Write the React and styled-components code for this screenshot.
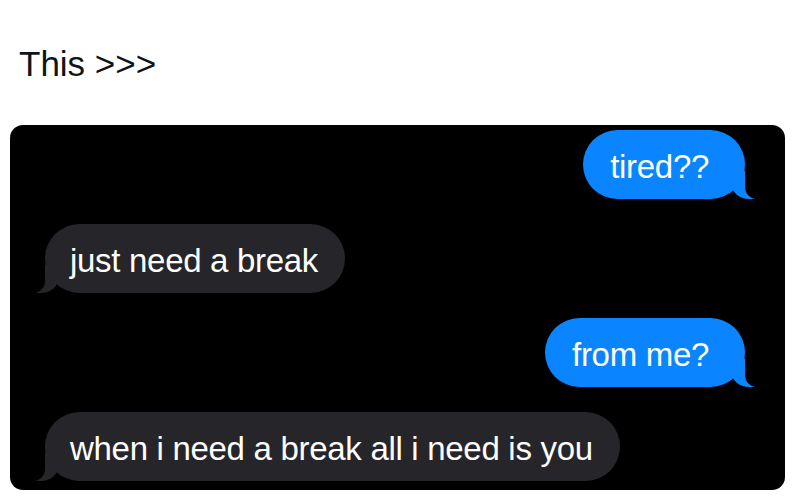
import React from "react";
import styled, { createGlobalStyle } from "styled-components";

const GlobalStyle = createGlobalStyle`
  html, body {
    margin: 0;
    padding: 0;
    background: #ffffff;
  }
  body {
    font-family: "Liberation Sans", Arial, sans-serif;
  }
`;

const Page = styled.div`
  width: 800px;
  height: 504px;
  overflow: hidden;
  padding-top: 42px;
  box-sizing: border-box;
`;

const Title = styled.div`
  margin: 0 0 0 19px;
  height: 83px;
  font-size: 35px;
  line-height: 44px;
  color: #0f1419;
  font-family: "Liberation Sans", Arial, sans-serif;
`;

const Chat = styled.div`
  margin: 0 15px 0 10px;
  background: #000000;
  border-radius: 13px;
  padding: 5px 40px 9px 35px;
  display: flex;
  flex-direction: column;
  gap: 25px;
`;

const Row = styled.div`
  display: flex;
  justify-content: ${({ $mine }) => ($mine ? "flex-end" : "flex-start")};
`;

const Bubble = styled.div`
  position: relative;
  z-index: 0;
  height: 69px;
  display: flex;
  align-items: center;
  padding: 4px ${({ $mine }) => ($mine ? "36px 0 27px" : "27px 0 25px")};
  box-sizing: border-box;
  border-radius: 35px;
  font-size: 33px;
  letter-spacing: -0.3px;
  color: #ffffff;
  background: ${({ $mine }) => ($mine ? "#0a84ff" : "#26252a")};
  font-family: "Liberation Sans", Arial, sans-serif;

  &::before {
    content: "";
    position: absolute;
    z-index: -1;
    bottom: 0;
    height: 28px;
    width: 24px;
    background: ${({ $mine }) => ($mine ? "#0a84ff" : "#26252a")};
    ${({ $mine }) =>
      $mine
        ? "right: -10px; border-bottom-left-radius: 18px 16px;"
        : "left: -10px; border-bottom-right-radius: 18px 16px;"}
  }

  &::after {
    content: "";
    position: absolute;
    z-index: -1;
    bottom: 0;
    height: 30px;
    width: 26px;
    background: #000000;
    ${({ $mine }) =>
      $mine
        ? "right: -26px; border-bottom-left-radius: 12px;"
        : "left: -26px; border-bottom-right-radius: 12px;"}
  }
`;

const messages = [
  { mine: true, text: "tired??" },
  { mine: false, text: "just need a break" },
  { mine: true, text: "from me?" },
  { mine: false, text: "when i need a break all i need is you" },
];

export default function App() {
  return (
    <>
      <GlobalStyle />
      <Page>
        <Title>This &gt;&gt;&gt;</Title>
        <Chat>
          {messages.map((m, i) => (
            <Row key={i} $mine={m.mine}>
              <Bubble $mine={m.mine}>{m.text}</Bubble>
            </Row>
          ))}
        </Chat>
      </Page>
    </>
  );
}
